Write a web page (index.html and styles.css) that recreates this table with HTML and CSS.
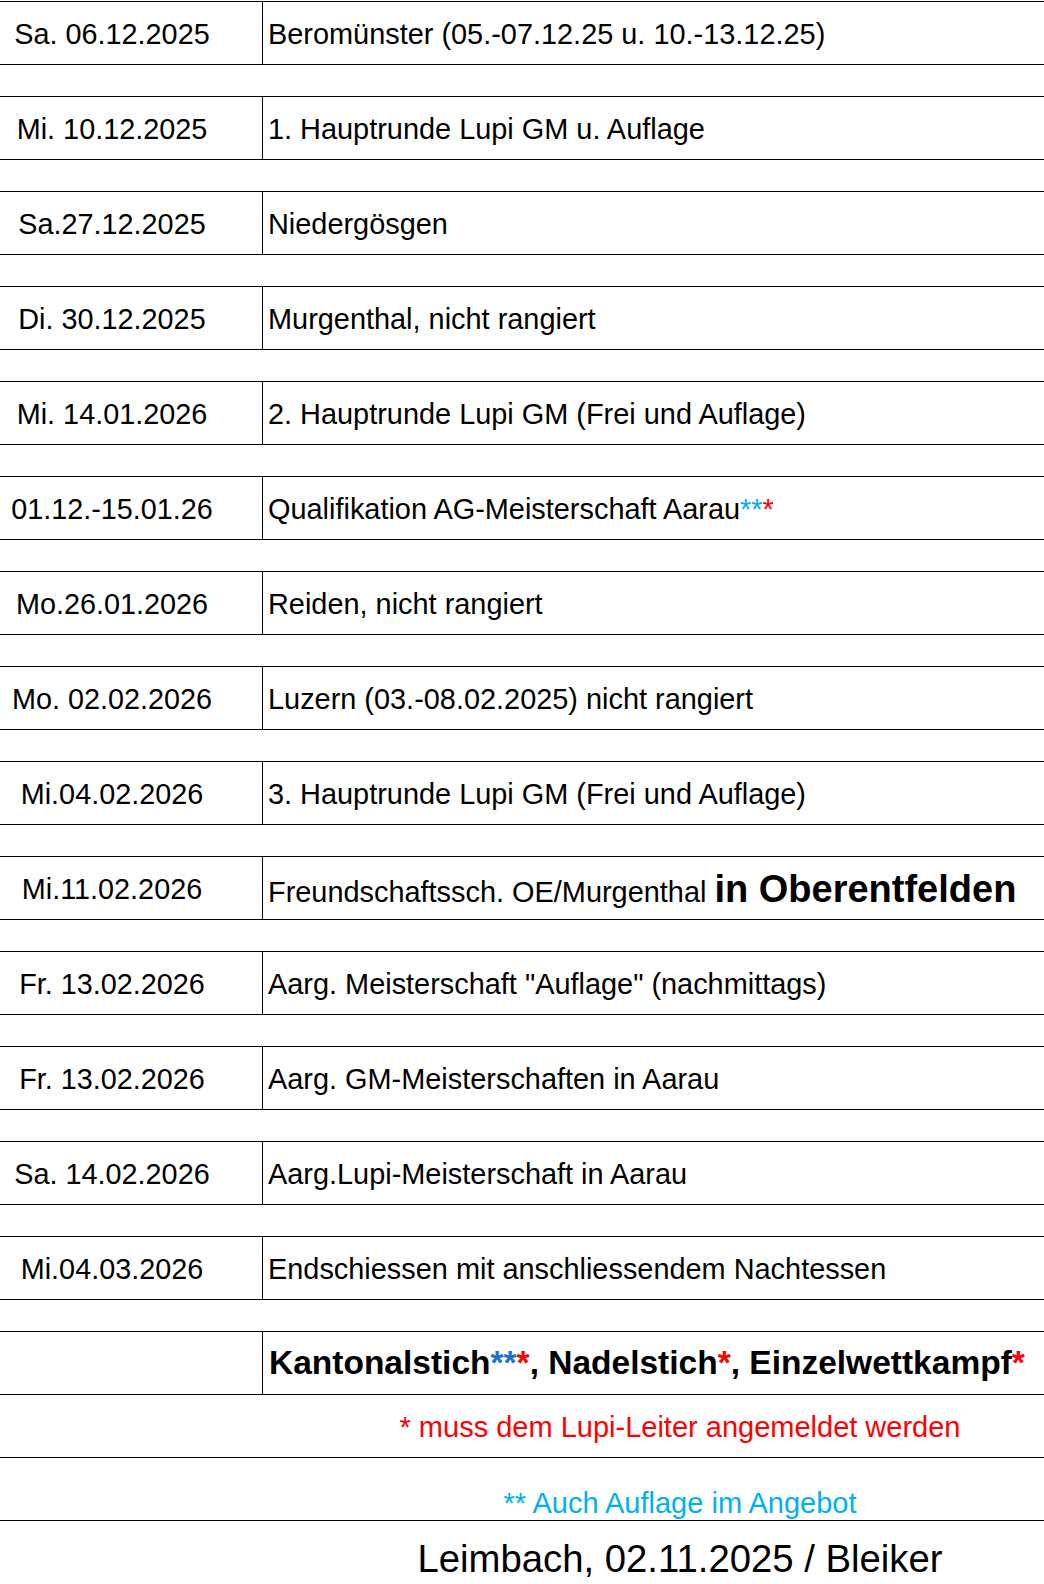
FILE: index.html
```html
<!DOCTYPE html>
<html lang="de">
<head>
<meta charset="utf-8">
<title>Lupi Programm</title>
<link rel="stylesheet" href="styles.css">
</head>
<body>
<div class="sheet">
  <div class="row"><div class="date">Sa. 06.12.2025</div><div class="desc">Beromünster (05.-07.12.25 u. 10.-13.12.25)</div></div>
  <div class="gap"></div>
  <div class="row"><div class="date">Mi. 10.12.2025</div><div class="desc">1. Hauptrunde Lupi GM u. Auflage</div></div>
  <div class="gap"></div>
  <div class="row"><div class="date">Sa.27.12.2025</div><div class="desc">Niedergösgen</div></div>
  <div class="gap"></div>
  <div class="row"><div class="date">Di. 30.12.2025</div><div class="desc">Murgenthal, nicht rangiert</div></div>
  <div class="gap"></div>
  <div class="row"><div class="date">Mi. 14.01.2026</div><div class="desc">2. Hauptrunde Lupi GM (Frei und Auflage)</div></div>
  <div class="gap"></div>
  <div class="row"><div class="date">01.12.-15.01.26</div><div class="desc">Qualifikation AG-Meisterschaft Aarau<span class="cyan">**</span><span class="red">*</span></div></div>
  <div class="gap"></div>
  <div class="row"><div class="date">Mo.26.01.2026</div><div class="desc">Reiden, nicht rangiert</div></div>
  <div class="gap"></div>
  <div class="row"><div class="date">Mo. 02.02.2026</div><div class="desc">Luzern (03.-08.02.2025) nicht rangiert</div></div>
  <div class="gap"></div>
  <div class="row"><div class="date">Mi.04.02.2026</div><div class="desc">3. Hauptrunde Lupi GM (Frei und Auflage)</div></div>
  <div class="gap"></div>
  <div class="row"><div class="date">Mi.11.02.2026</div><div class="desc"><span>Freundschaftssch. OE/Murgenthal <b class="big">in Oberentfelden</b></span></div></div>
  <div class="gap"></div>
  <div class="row"><div class="date">Fr. 13.02.2026</div><div class="desc">Aarg. Meisterschaft "Auflage" (nachmittags)</div></div>
  <div class="gap"></div>
  <div class="row"><div class="date">Fr. 13.02.2026</div><div class="desc">Aarg. GM-Meisterschaften in Aarau</div></div>
  <div class="gap"></div>
  <div class="row"><div class="date">Sa. 14.02.2026</div><div class="desc">Aarg.Lupi-Meisterschaft in Aarau</div></div>
  <div class="gap"></div>
  <div class="row"><div class="date">Mi.04.03.2026</div><div class="desc">Endschiessen mit anschliessendem Nachtessen</div></div>
  <div class="gap"></div>
  <div class="row"><div class="date"></div><div class="desc bold">Kantonalstich<span class="blue">**</span><span class="red">*</span>, Nadelstich<span class="red">*</span>, Einzelwettkampf<span class="red">*</span></div></div>
  <div class="note note-red">* muss dem Lupi-Leiter angemeldet werden</div>
  <div class="note note-cyan">** Auch Auflage im Angebot</div>
  <div class="sign">Leimbach, 02.11.2025 / Bleiker</div>
</div>
</body>
</html>
```

FILE: styles.css
```css
html, body {
  margin: 0;
  padding: 0;
  background: #ffffff;
}

body {
  width: 1044px;
  height: 1584px;
  overflow: hidden;
  padding-top: 1px;
  box-sizing: border-box;
  font-family: "Liberation Sans", Arial, sans-serif;
  color: #000000;
}

.sheet {
  border-top: 1px solid #000;
}

.row {
  display: grid;
  grid-template-columns: 263px 1fr;
  height: 63px;
  box-sizing: border-box;
  border-bottom: 1px solid #000;
  font-size: 28.9px;
}

.date {
  box-sizing: border-box;
  border-right: 1px solid #000;
  padding-right: 38px;
  padding-top: 2px;
  display: flex;
  align-items: center;
  justify-content: center;
  white-space: nowrap;
  font-size: 28.8px;
}

.desc {
  padding-left: 5px;
  padding-top: 2px;
  display: flex;
  align-items: center;
  white-space: nowrap;
}

.desc.bold {
  font-weight: bold;
  font-size: 33.5px;
  padding-left: 6px;
  padding-top: 0;
}

.big {
  font-size: 38px;
  font-weight: bold;
}

.gap {
  height: 32px;
  box-sizing: border-box;
  border-bottom: 1px solid #000;
}

.cyan {
  color: #00b0f0;
}

.blue {
  color: #1f6fd0;
}

.red {
  color: #ff0000;
}

.note {
  height: 63px;
  box-sizing: border-box;
  border-bottom: 1px solid #000;
  padding-left: 316px;
  display: flex;
  justify-content: center;
  font-size: 29px;
  white-space: nowrap;
}

.note-red {
  color: #ff0000;
  align-items: center;
  padding-top: 2px;
}

.note-cyan {
  color: #00b0f0;
  align-items: flex-end;
}

.sign {
  height: 63px;
  box-sizing: border-box;
  padding-left: 316px;
  padding-bottom: 3px;
  display: flex;
  justify-content: center;
  align-items: flex-end;
  font-size: 38.3px;
  white-space: nowrap;
}
```
